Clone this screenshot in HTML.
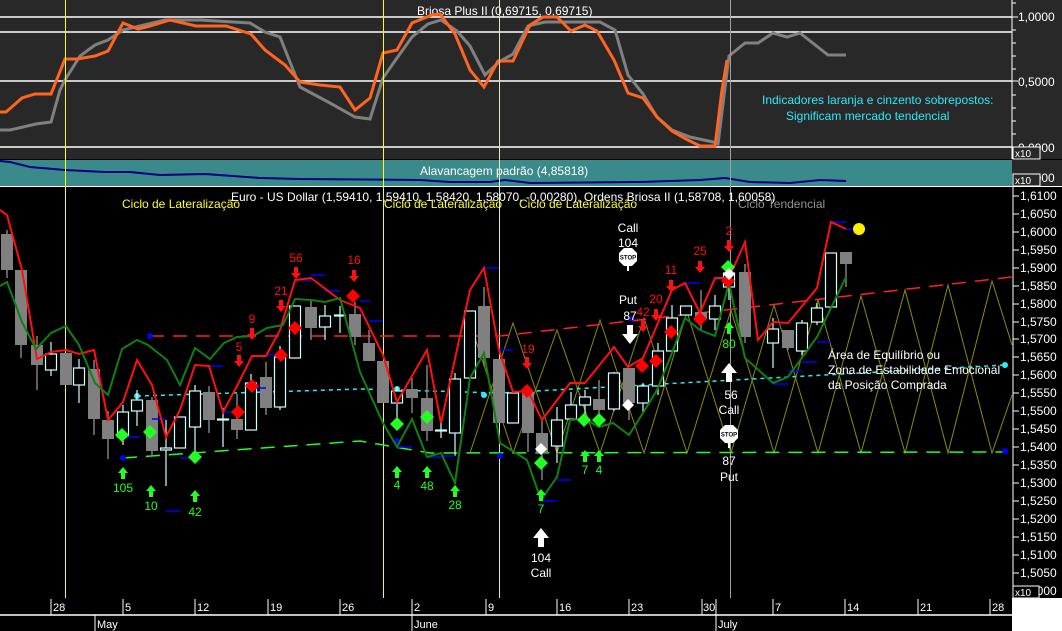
<!DOCTYPE html>
<html><head><meta charset="utf-8"><style>
html,body{margin:0;padding:0;background:#000;width:1062px;height:631px;overflow:hidden}
svg{display:block;font-family:"Liberation Sans",sans-serif}
</style></head><body>
<svg width="1062" height="631" viewBox="0 0 1062 631" xmlns="http://www.w3.org/2000/svg">
<defs>
<g id="rd"><polygon points="0,-7 7,0 0,7 -7,0" fill="#ff0000"/></g>
<g id="gd"><polygon points="0,-7 7,0 0,7 -7,0" fill="#22ff22"/></g>
<g id="ra"><path d="M-2,-7h4v6h3l-5,6l-5,-6h3z" fill="#ff1010"/></g>
<g id="ga"><path d="M-2,7h4v-6h3l-5,-6l-5,6h3z" fill="#22ff22"/></g>
<g id="wu"><path d="M-3,10h6v-9h5l-8,-10l-8,10h5z" fill="#fff"/></g>
<g id="wdn"><path d="M-3,-10h6v9h5l-8,10l-8,-10h5z" fill="#fff"/></g>
<g id="stop"><rect x="-1" y="5" width="2" height="9" fill="#fff"/><polygon points="-4,-9 4,-9 9,-4 9,4 4,9 -4,9 -9,4 -9,-4" fill="#fff"/><text x="0" y="2.5" font-size="6" font-weight="bold" text-anchor="middle" fill="#000">STOP</text></g>
</defs>

<rect x="0" y="0" width="1062" height="159" fill="#282828"/>
<g stroke="#fff" stroke-width="1.5">
<line x1="0" y1="17" x2="1012" y2="17"/><line x1="0" y1="32" x2="1012" y2="32"/>
<line x1="0" y1="81" x2="1012" y2="81"/><line x1="0" y1="147" x2="1012" y2="147"/>
</g>
<text x="417" y="15" font-size="12" fill="#fff">Briosa Plus II (0,69715, 0,69715)</text>
<polyline fill="none" stroke="#808080" stroke-width="3" points="0,130 10,130 36,124 51,122 60,90 65,80 80,56 95,45 108,40 123,30 140,26 165,20 200,20 250,23 265,32 280,37 300,87 330,103 355,117 370,119 383,78 397,58 412,37 428,24 441,20 457,31 470,46 485,75 499,62 513,54 528,26 545,22 570,22 600,22 615,30 628,75 643,94 657,117 672,130 690,137 713,142 718,144 729,56 745,43 758,43 773,33 787,37 800,33 828,55 846,55"/>
<polyline fill="none" stroke="#ff6420" stroke-width="3" points="0,112 6,112 22,98 35,94 51,94 65,59 77,59 95,56 108,51 123,23 138,29 150,26 170,20 196,26 226,26 251,34 265,50 285,65 300,82 320,85 340,87 355,110 370,98 383,53 397,50 412,23 432,15 440,14 455,34 470,70 484,87 498,61 513,61 530,25 543,17 557,17 571,31 585,25 597,31 614,60 628,93 643,98 657,117 672,131 686,139 700,146 715,146 722,90 727,60"/>
<text x="762" y="104" font-size="12" fill="#30e8f8">Indicadores laranja e cinzento sobrepostos:</text>
<text x="786" y="120" font-size="12" fill="#30e8f8">Significam mercado tendencial</text>
<g fill="#fff" font-size="12">
<text x="1018" y="21">1,0000</text><text x="1018" y="86">0,5000</text><text x="1018" y="152">0,0000</text>
</g>
<g stroke="#fff"><line x1="1012" y1="0" x2="1012" y2="159"/><line x1="1012" y1="3" x2="1016" y2="3"/><line x1="1012" y1="17" x2="1018" y2="17"/><line x1="1012" y1="30" x2="1016" y2="30"/><line x1="1012" y1="43" x2="1016" y2="43"/><line x1="1012" y1="56" x2="1016" y2="56"/><line x1="1012" y1="69" x2="1016" y2="69"/><line x1="1012" y1="81" x2="1018" y2="81"/><line x1="1012" y1="95" x2="1016" y2="95"/><line x1="1012" y1="108" x2="1016" y2="108"/><line x1="1012" y1="121" x2="1016" y2="121"/><line x1="1012" y1="134" x2="1016" y2="134"/><line x1="1012" y1="147" x2="1018" y2="147"/></g>
<rect x="1013" y="147" width="27" height="12" fill="#282828" stroke="#fff"/><text x="1015" y="157" font-size="10" fill="#fff">x10</text>

<rect x="0" y="160" width="1012" height="26" fill="#3a8a8c"/>
<rect x="1012" y="160" width="50" height="26" fill="#282828"/>
<line x1="0" y1="186.5" x2="1062" y2="186.5" stroke="#fff"/>
<text x="420" y="175" font-size="12" fill="#fff">Alavancagem padrão (4,85818)</text>
<polyline fill="none" stroke="#000080" stroke-width="2" points="0,161 10,162 30,167 65,170 105,172 130,172 160,175 205,174 260,178 300,179 420,180 450,182 490,182 505,180 530,183 640,182 700,180 725,178 750,182 790,183 820,180 846,181"/>
<text x="1018" y="182" font-size="12" fill="#fff">5,0000</text>
<rect x="1013" y="174" width="27" height="12" fill="#282828" stroke="#fff"/><text x="1015" y="184" font-size="10" fill="#fff">x10</text>

<rect x="0" y="187" width="1012" height="411" fill="#000"/>
<g stroke-width="1"><line x1="65.5" y1="0" x2="65.5" y2="598" stroke="#ffff00"/><line x1="383.5" y1="0" x2="383.5" y2="598" stroke="#ffff00"/><line x1="499.5" y1="0" x2="499.5" y2="598" stroke="#e8e8b0"/><line x1="730.5" y1="0" x2="730.5" y2="598" stroke="#a0a0a0"/></g>

<g stroke="#8a8a10" stroke-width="1" fill="none">
<polyline points="470,453 513,323 557,453 600,320 644,453 687,312 731,453 774,305 818,453 861,296 905,453 948,285 992,453 1012,395"/>
<polyline points="470,323 513,453 557,330 600,453 644,318 687,453 731,310 774,453 818,300 861,453 905,290 948,453 992,281 1012,345"/>
</g>

<g fill="none" stroke-width="1.5">
<polyline points="150,336 500,336 1012,277" stroke="#ff2020" stroke-dasharray="14,9"/>
<polyline points="123,458 360,441 430,453 1005,452" stroke="#22ff22" stroke-dasharray="14,9"/>
<polyline points="137,396 360,389 500,393 1005,365" stroke="#30e8f8" stroke-dasharray="4,4"/>
</g>
<g fill="#0000ff"><circle cx="150" cy="336" r="3"/><circle cx="123" cy="458" r="3"/><circle cx="484" cy="336" r="3"/><circle cx="397" cy="441" r="3"/><circle cx="500" cy="456" r="3"/><circle cx="631" cy="319" r="2.5"/><circle cx="1005" cy="451" r="3"/></g>
<g fill="#30e8f8"><circle cx="137" cy="396" r="3"/><circle cx="397" cy="389" r="3"/><circle cx="484" cy="395" r="3"/><circle cx="1005" cy="365" r="3"/></g>

<g stroke="#808080" stroke-width="1.5">
<line x1="7" y1="230" x2="7" y2="278"/><line x1="21" y1="270" x2="21" y2="358"/><line x1="37" y1="336" x2="37" y2="390"/><line x1="94" y1="360" x2="94" y2="435"/><line x1="108" y1="411" x2="108" y2="459"/><line x1="152" y1="397" x2="152" y2="456"/><line x1="209" y1="386" x2="209" y2="433"/><line x1="237" y1="394" x2="237" y2="439"/><line x1="266" y1="362" x2="266" y2="415"/><line x1="311" y1="299" x2="311" y2="340"/><line x1="355" y1="302" x2="355" y2="345"/><line x1="369" y1="330" x2="369" y2="361"/><line x1="412" y1="378" x2="412" y2="413"/><line x1="427" y1="365" x2="427" y2="441"/><line x1="484" y1="287" x2="484" y2="366"/><line x1="528" y1="390" x2="528" y2="452"/><line x1="542" y1="420" x2="542" y2="480"/><line x1="599" y1="380" x2="599" y2="420"/><line x1="629" y1="368" x2="629" y2="420"/><line x1="701" y1="290" x2="701" y2="330"/><line x1="745" y1="264" x2="745" y2="343"/><line x1="788" y1="330" x2="788" y2="350"/><line x1="846" y1="252" x2="846" y2="287"/>
</g>
<g fill="#808080">
<rect x="1" y="234" width="12" height="36"/><rect x="15" y="270" width="12" height="75"/><rect x="31" y="345" width="12" height="20"/><rect x="60" y="353" width="12" height="32"/><rect x="88" y="369" width="12" height="50"/><rect x="102" y="420" width="12" height="19"/><rect x="146" y="400" width="12" height="51"/><rect x="203" y="392" width="12" height="28"/><rect x="231" y="419" width="12" height="11"/><rect x="260" y="377" width="12" height="31"/><rect x="305" y="307" width="12" height="21"/><rect x="349" y="314" width="12" height="23"/><rect x="363" y="343" width="12" height="18"/><rect x="377" y="361" width="12" height="42"/><rect x="406" y="389" width="12" height="9"/><rect x="421" y="398" width="12" height="33"/><rect x="478" y="306" width="12" height="52"/><rect x="493" y="359" width="12" height="64"/><rect x="522" y="392" width="12" height="41"/><rect x="536" y="433" width="12" height="20"/><rect x="593" y="399" width="12" height="11"/><rect x="623" y="368" width="12" height="35"/><rect x="695" y="312" width="12" height="7"/><rect x="739" y="272" width="12" height="65"/><rect x="782" y="330" width="12" height="18"/><rect x="840" y="252" width="12" height="12"/>
</g>
<g stroke="#d0ffff" stroke-width="1.2" fill="none">
<line x1="51" y1="342" x2="51" y2="376"/><line x1="79" y1="359" x2="79" y2="403"/><line x1="123" y1="405" x2="123" y2="445"/><line x1="137" y1="390" x2="137" y2="426"/><line x1="166" y1="420" x2="166" y2="486"/><line x1="195" y1="385" x2="195" y2="453"/><line x1="223" y1="408" x2="223" y2="447"/><line x1="251" y1="374" x2="251" y2="430"/><line x1="280" y1="346" x2="280" y2="410"/><line x1="325" y1="305" x2="325" y2="340"/><line x1="340" y1="306" x2="340" y2="333"/><line x1="397" y1="387" x2="397" y2="423"/><line x1="441" y1="423" x2="441" y2="438"/><line x1="455" y1="373" x2="455" y2="456"/><line x1="557" y1="407" x2="557" y2="463"/><line x1="571" y1="392" x2="571" y2="420"/><line x1="585" y1="390" x2="585" y2="420"/><line x1="614" y1="372" x2="614" y2="411"/><line x1="643" y1="383" x2="643" y2="412"/><line x1="658" y1="343" x2="658" y2="395"/><line x1="672" y1="305" x2="672" y2="351"/><line x1="715" y1="295" x2="715" y2="330"/><line x1="729" y1="265" x2="729" y2="300"/><line x1="773" y1="318" x2="773" y2="368"/><line x1="802" y1="320" x2="802" y2="355"/><line x1="817" y1="303" x2="817" y2="325"/>
</g>
<g stroke="#d0ffff" stroke-width="1.2" fill="#000">
<rect x="45.5" y="354" width="11" height="16"/><rect x="73.5" y="368" width="11" height="17"/><rect x="117.5" y="412" width="11" height="25"/><rect x="131.5" y="400" width="11" height="11"/><rect x="160.5" y="448" width="11" height="2"/><rect x="174.5" y="417" width="11" height="31"/><rect x="189.5" y="391" width="11" height="36"/><rect x="217.5" y="419" width="11" height="1"/><rect x="245.5" y="383" width="11" height="47"/><rect x="274.5" y="357" width="11" height="50"/><rect x="289.5" y="306" width="11" height="52"/><rect x="319.5" y="316" width="11" height="11"/><rect x="334.5" y="315" width="11" height="1"/><rect x="391.5" y="391" width="11" height="12"/><rect x="435.5" y="430" width="11" height="1"/><rect x="449.5" y="379" width="11" height="54"/><rect x="464.5" y="311" width="11" height="67"/><rect x="507.5" y="393" width="11" height="30"/><rect x="551.5" y="420" width="11" height="26"/><rect x="565.5" y="405" width="11" height="14"/><rect x="579.5" y="397" width="11" height="8"/><rect x="608.5" y="373" width="11" height="36"/><rect x="637.5" y="386" width="11" height="17"/><rect x="652.5" y="351" width="11" height="35"/><rect x="666.5" y="318" width="11" height="33"/><rect x="680.5" y="306" width="11" height="9"/><rect x="709.5" y="306" width="11" height="13"/><rect x="723.5" y="273" width="11" height="14"/><rect x="767.5" y="329" width="11" height="14"/><rect x="796.5" y="323" width="11" height="28"/><rect x="811.5" y="308" width="11" height="14"/><rect x="825.5" y="253" width="11" height="54"/>
</g>

<g stroke="#0000ff" stroke-width="1.5">
<line x1="127" y1="437" x2="140" y2="437"/><line x1="152" y1="419" x2="166" y2="419"/><line x1="166" y1="511" x2="180" y2="511"/><line x1="180" y1="458" x2="195" y2="458"/><line x1="209" y1="366" x2="223" y2="366"/><line x1="223" y1="412" x2="237" y2="412"/><line x1="252" y1="388" x2="266" y2="388"/><line x1="266" y1="355" x2="280" y2="355"/><line x1="295" y1="280" x2="311" y2="280"/><line x1="311" y1="275" x2="325" y2="275"/><line x1="325" y1="291" x2="340" y2="291"/><line x1="360" y1="301" x2="370" y2="301"/><line x1="369" y1="321" x2="383" y2="321"/><line x1="397" y1="447" x2="412" y2="447"/><line x1="427" y1="457" x2="441" y2="457"/><line x1="441" y1="456" x2="455" y2="456"/><line x1="484" y1="268" x2="499" y2="268"/><line x1="499" y1="350" x2="513" y2="350"/><line x1="541" y1="501" x2="557" y2="501"/><line x1="557" y1="480" x2="571" y2="480"/><line x1="686" y1="283" x2="700" y2="283"/><line x1="715" y1="279" x2="729" y2="279"/><line x1="773" y1="384" x2="788" y2="384"/><line x1="788" y1="371" x2="802" y2="371"/><line x1="802" y1="362" x2="817" y2="362"/><line x1="817" y1="342" x2="831" y2="342"/><line x1="831" y1="222" x2="846" y2="222"/><line x1="846" y1="229" x2="856" y2="229"/>
</g>

<polyline fill="none" stroke="#ff1010" stroke-width="2" points="0,210 7,215 22,270 37,359 51,352 66,350 79,354 94,350 108,420 123,402 137,360 152,385 166,437 180,410 195,365 209,366 223,412 237,386 252,356 266,356 280,330 295,280 311,278 340,300 360,308 383,355 397,402 427,350 441,423 470,290 484,268 499,350 513,392 528,391 542,420 570,383 585,383 614,347 628,367 643,358 672,290 685,283 700,313 715,278 729,278 745,242 758,340 773,322 788,323 817,288 831,222 846,229"/>
<polyline fill="none" stroke="#108010" stroke-width="2" points="0,286 7,282 22,322 36,349 51,333 66,326 79,345 95,383 108,395 122,349 137,340 148,345 167,360 180,385 195,348 210,359 224,343 237,337 253,336 267,328 283,325 295,299 311,300 325,302 340,298 360,372 383,423 397,447 412,419 427,457 441,453 455,483 470,378 484,353 500,443 527,460 541,500 557,477 570,420 585,419 599,427 613,423 629,435 643,413 657,390 672,353 685,318 700,330 715,336 729,283 745,358 773,383 788,377 817,337 831,308 846,277"/>

<use href="#rd" x="238" y="412"/><use href="#rd" x="252" y="386"/><use href="#rd" x="281" y="355"/><use href="#rd" x="295" y="328"/><use href="#rd" x="353" y="296"/><use href="#rd" x="527" y="391"/><use href="#rd" x="642" y="366"/><use href="#rd" x="656" y="361"/><use href="#rd" x="671" y="332"/><use href="#rd" x="700" y="319"/><use href="#rd" x="728" y="281"/>
<use href="#gd" x="122" y="435"/><use href="#gd" x="150" y="432"/><use href="#gd" x="195" y="457"/><use href="#gd" x="397" y="424"/><use href="#gd" x="427" y="417"/><use href="#gd" x="541" y="463"/><use href="#gd" x="584" y="420"/><use href="#gd" x="599" y="420"/><use href="#gd" x="728" y="267"/>
<polygon points="628,399 634,405 628,411 622,405" fill="#fff"/><polygon points="541,443 547,449 541,455 535,449" fill="#fff"/><polygon points="729,268 735,274 729,280 723,274" fill="#fff"/>

<use href="#ra" x="239" y="362"/><use href="#ra" x="252" y="335"/><use href="#ra" x="281" y="307"/><use href="#ra" x="296" y="274"/><use href="#ra" x="354" y="277"/><use href="#ra" x="527" y="364"/><use href="#ra" x="643" y="327"/><use href="#ra" x="656" y="316"/><use href="#ra" x="671" y="287"/><use href="#ra" x="700" y="268"/><use href="#ra" x="729" y="247"/>
<g fill="#ff1010" font-size="12" text-anchor="middle">
<text x="239" y="351">5</text><text x="252" y="323">9</text><text x="281" y="295">21</text><text x="296" y="262">56</text><text x="354" y="264">16</text><text x="528" y="353">19</text><text x="643" y="316">42</text><text x="656" y="303">20</text><text x="671" y="274">11</text><text x="700" y="255">25</text><text x="729" y="235">2</text>
</g>
<use href="#ga" x="123" y="472"/><use href="#ga" x="151" y="490"/><use href="#ga" x="195" y="495"/><use href="#ga" x="397" y="471"/><use href="#ga" x="427" y="471"/><use href="#ga" x="455" y="490"/><use href="#ga" x="541" y="494"/><use href="#ga" x="585" y="455"/><use href="#ga" x="599" y="455"/><use href="#ga" x="729" y="327"/>
<g fill="#22ff22" font-size="12" text-anchor="middle">
<text x="123" y="492">105</text><text x="151" y="510">10</text><text x="195" y="516">42</text><text x="397" y="489">4</text><text x="427" y="490">48</text><text x="455" y="509">28</text><text x="541" y="513">7</text><text x="585" y="474">7</text><text x="599" y="474">4</text><text x="729" y="348">80</text>
</g>

<g fill="#fff" font-size="12" text-anchor="middle">
<text x="628" y="232">Call</text><text x="628" y="247">104</text>
<text x="628" y="304">Put</text><text x="630" y="320">87</text>
<text x="541" y="562">104</text><text x="541" y="577">Call</text>
<text x="731" y="399">56</text><text x="729" y="414">Call</text>
<text x="729" y="465">87</text><text x="729" y="481">Put</text>
</g>
<use href="#stop" x="628" y="257"/><use href="#stop" x="729" y="434"/>
<use href="#wdn" x="630" y="335"/><use href="#wu" x="541" y="537"/><use href="#wu" x="729" y="372"/>
<circle cx="859" cy="229" r="6" fill="#ffee00"/>

<g fill="#fff" font-size="12">
<text x="828" y="359">Área de Equilíbrio ou</text>
<text x="828" y="374">Zona de Estabilidade Emocional</text>
<text x="828" y="389">da Posição Comprada</text>
</g>

<g font-size="12">
<text x="122" y="208" fill="#ffff20">Ciclo de Lateralização</text>
<text x="384" y="208" fill="#ffff20">Ciclo de Lateralização</text>
<text x="519" y="208" fill="#ffff20">Ciclo de Lateralização</text>
<text x="738" y="208" fill="#909090">Ciclo Tendencial</text>
<text x="231" y="201" fill="#fff">Euro - US Dollar (1,59410, 1,59410, 1,58420, 1,58070, -0,00280), Ordens Briosa II (1,58708, 1,60058)</text>
</g>

<rect x="1013" y="187" width="49" height="411" fill="#000"/>
<line x1="1013" y1="187" x2="1013" y2="598" stroke="#fff"/>
<g fill="#fff" font-size="12">
<text x="1020" y="200">1,6100</text><text x="1020" y="218">1,6050</text><text x="1020" y="236">1,6000</text><text x="1020" y="254">1,5950</text><text x="1020" y="272">1,5900</text><text x="1020" y="290">1,5850</text><text x="1020" y="308">1,5800</text><text x="1020" y="326">1,5750</text><text x="1020" y="343">1,5700</text><text x="1020" y="361">1,5650</text><text x="1020" y="379">1,5600</text><text x="1020" y="397">1,5550</text><text x="1020" y="415">1,5500</text><text x="1020" y="433">1,5450</text><text x="1020" y="451">1,5400</text><text x="1020" y="469">1,5350</text><text x="1020" y="487">1,5300</text><text x="1020" y="505">1,5250</text><text x="1020" y="523">1,5200</text><text x="1020" y="541">1,5150</text><text x="1020" y="559">1,5100</text><text x="1020" y="577">1,5050</text><text x="1020" y="595">1,5000</text>
</g>
<g stroke="#fff">
<line x1="1013" y1="196" x2="1019" y2="196"/><line x1="1013" y1="214" x2="1019" y2="214"/><line x1="1013" y1="232" x2="1019" y2="232"/><line x1="1013" y1="250" x2="1019" y2="250"/><line x1="1013" y1="268" x2="1019" y2="268"/><line x1="1013" y1="286" x2="1019" y2="286"/><line x1="1013" y1="304" x2="1019" y2="304"/><line x1="1013" y1="322" x2="1019" y2="322"/><line x1="1013" y1="339" x2="1019" y2="339"/><line x1="1013" y1="357" x2="1019" y2="357"/><line x1="1013" y1="375" x2="1019" y2="375"/><line x1="1013" y1="393" x2="1019" y2="393"/><line x1="1013" y1="411" x2="1019" y2="411"/><line x1="1013" y1="429" x2="1019" y2="429"/><line x1="1013" y1="447" x2="1019" y2="447"/><line x1="1013" y1="465" x2="1019" y2="465"/><line x1="1013" y1="483" x2="1019" y2="483"/><line x1="1013" y1="501" x2="1019" y2="501"/><line x1="1013" y1="519" x2="1019" y2="519"/><line x1="1013" y1="537" x2="1019" y2="537"/><line x1="1013" y1="555" x2="1019" y2="555"/><line x1="1013" y1="573" x2="1019" y2="573"/><line x1="1013" y1="591" x2="1019" y2="591"/>
</g>
<rect x="1013" y="586" width="26" height="12" fill="#000" stroke="#fff"/><text x="1015" y="596" font-size="10" fill="#fff">x10</text>

<rect x="0" y="598" width="1012" height="33" fill="#000"/>
<rect x="1012" y="598" width="50" height="33" fill="#fff"/>
<line x1="0" y1="615" x2="1012" y2="615" stroke="#fff" stroke-width="1.5"/>
<g stroke="#fff">
<line x1="51" y1="599" x2="51" y2="615"/><line x1="123" y1="599" x2="123" y2="615"/><line x1="195" y1="599" x2="195" y2="615"/><line x1="268" y1="599" x2="268" y2="615"/><line x1="340" y1="599" x2="340" y2="615"/><line x1="412" y1="599" x2="412" y2="631"/><line x1="486" y1="599" x2="486" y2="615"/><line x1="557" y1="599" x2="557" y2="615"/><line x1="629" y1="599" x2="629" y2="615"/><line x1="702" y1="599" x2="702" y2="615"/><line x1="773" y1="599" x2="773" y2="615"/><line x1="845" y1="599" x2="845" y2="615"/><line x1="918" y1="599" x2="918" y2="615"/><line x1="990" y1="599" x2="990" y2="615"/><line x1="95" y1="615" x2="95" y2="631"/><line x1="716" y1="599" x2="716" y2="631"/>
</g>
<g fill="#fff" font-size="11">
<text x="53" y="611">28</text><text x="125" y="611">5</text><text x="197" y="611">12</text><text x="270" y="611">19</text><text x="342" y="611">26</text><text x="414" y="611">2</text><text x="488" y="611">9</text><text x="559" y="611">16</text><text x="631" y="611">23</text><text x="703" y="611">30</text><text x="775" y="611">7</text><text x="847" y="611">14</text><text x="920" y="611">21</text><text x="992" y="611">28</text>
<text x="97" y="628">May</text><text x="414" y="628">June</text><text x="718" y="628">July</text>
</g>
</svg>
</body></html>
